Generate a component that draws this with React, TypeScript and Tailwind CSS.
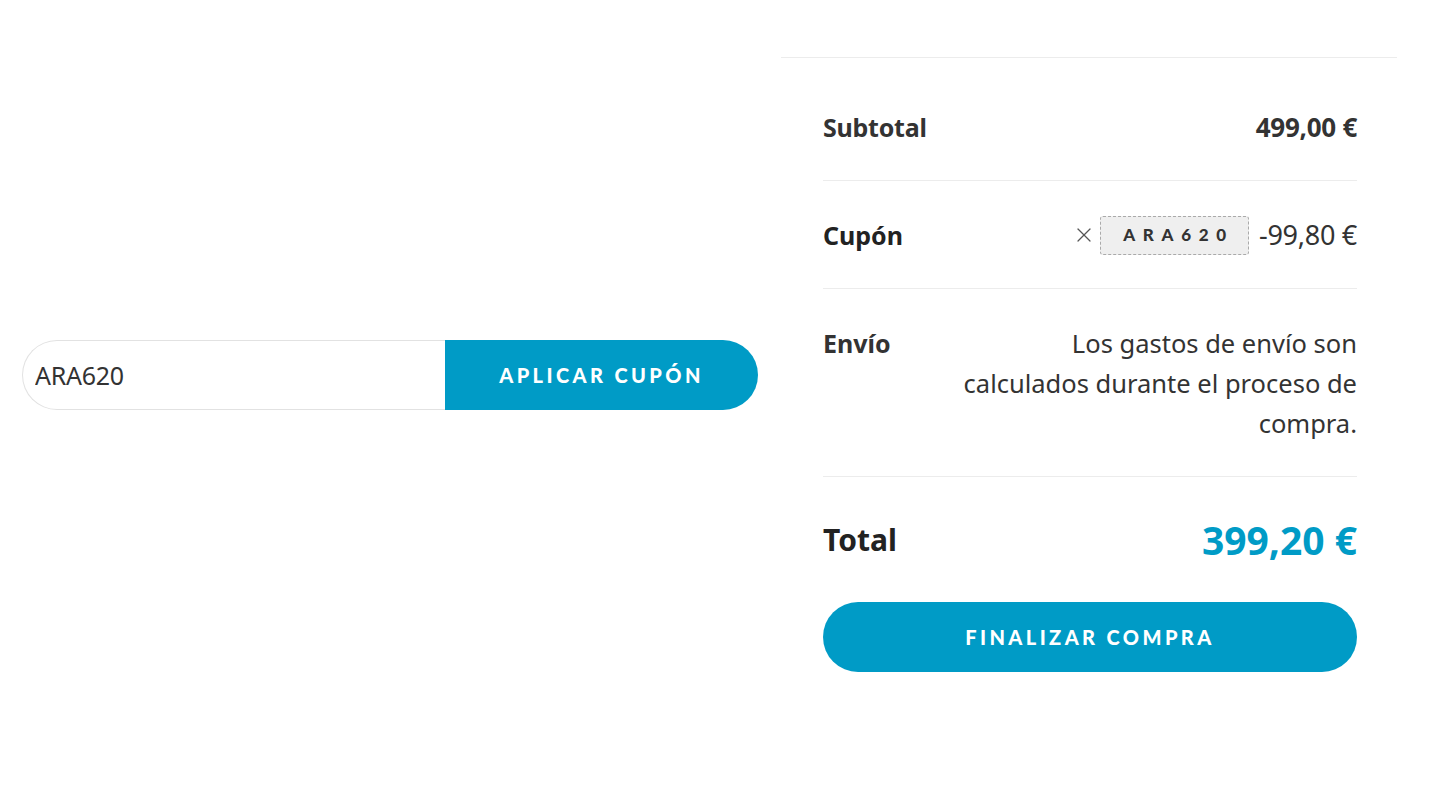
import { X } from "lucide-react";

const body = { fontFamily: '"Noto Sans", sans-serif' };

export default function App() {
  return (
    <div className="w-[1440px] h-[810px] bg-white flex text-[#333]" style={body}>
      {/* cupón */}
      <div className="w-[781px] flex items-center pl-[22px] pr-[23px] pb-[60px]">
        <div className="flex w-full h-[70px]">
          <input
            defaultValue="ARA620"
            className="flex-1 min-w-0 h-full border border-[#e2e2e2] border-r-0 rounded-l-full pl-[12px] text-[25px] tracking-[-0.01em] text-[#333] outline-none"
          />
          <button className="w-[313px] h-full bg-[#009bc6] rounded-r-full text-white font-black text-[20px] tracking-[0.17em] font-['Lato',sans-serif]">
            APLICAR CUPÓN
          </button>
        </div>
      </div>

      {/* resumen */}
      <div className="w-[616px] mt-[57px] border-t border-[#ececec] pt-[15px] pl-[42px] pr-[40px] self-start">
        <div className="flex justify-between items-center pt-[34px] pb-[33px] leading-[40px] border-b border-[#ececec]">
          <span className="font-bold text-[25px] tracking-[-0.01em]">Subtotal</span>
          <span className="font-bold text-[26px] tracking-[-0.01em]">499,00 €</span>
        </div>

        <div className="flex justify-between items-center pt-[34px] pb-[33px] leading-[40px] border-b border-[#ececec]">
          <span className="font-bold text-[25px] text-[#222]">Cupón</span>
          <div className="flex items-center">
            <X className="w-[24px] h-[24px] text-[#555] mr-[4px]" strokeWidth={1.2} />
            <span className="h-[39px] w-[149px] flex items-center justify-center bg-[#efefef] border border-dashed border-[#aaa] rounded-[3px] font-['Lato',sans-serif] font-black text-[17px] tracking-[0.45em] pl-[8px] text-[#333]">
              ARA620
            </span>
            <span className="ml-[10px] text-[27px] tracking-[-0.01em]">-99,80 €</span>
          </div>
        </div>

        <div className="flex justify-between items-start pt-[34px] pb-[33px] leading-[40px] border-b border-[#ececec]">
          <span className="font-bold text-[25px]">Envío</span>
          <p className="text-right text-[25.5px] text-[#333]">
            Los gastos de envío son
            <br />
            calculados durante el proceso de
            <br />
            compra.
          </p>
        </div>

        <div className="flex justify-between items-center pt-[34px] pb-[33px] leading-[58px]">
          <span className="font-bold text-[30px] text-[#222]">Total</span>
          <span className="font-bold text-[39px] text-[#009bc6]">399,20 €</span>
        </div>

        <button className="w-full h-[70px] bg-[#009bc6] rounded-full text-white font-black text-[20px] tracking-[0.17em] font-['Lato',sans-serif]">
          FINALIZAR COMPRA
        </button>
      </div>
    </div>
  );
}
